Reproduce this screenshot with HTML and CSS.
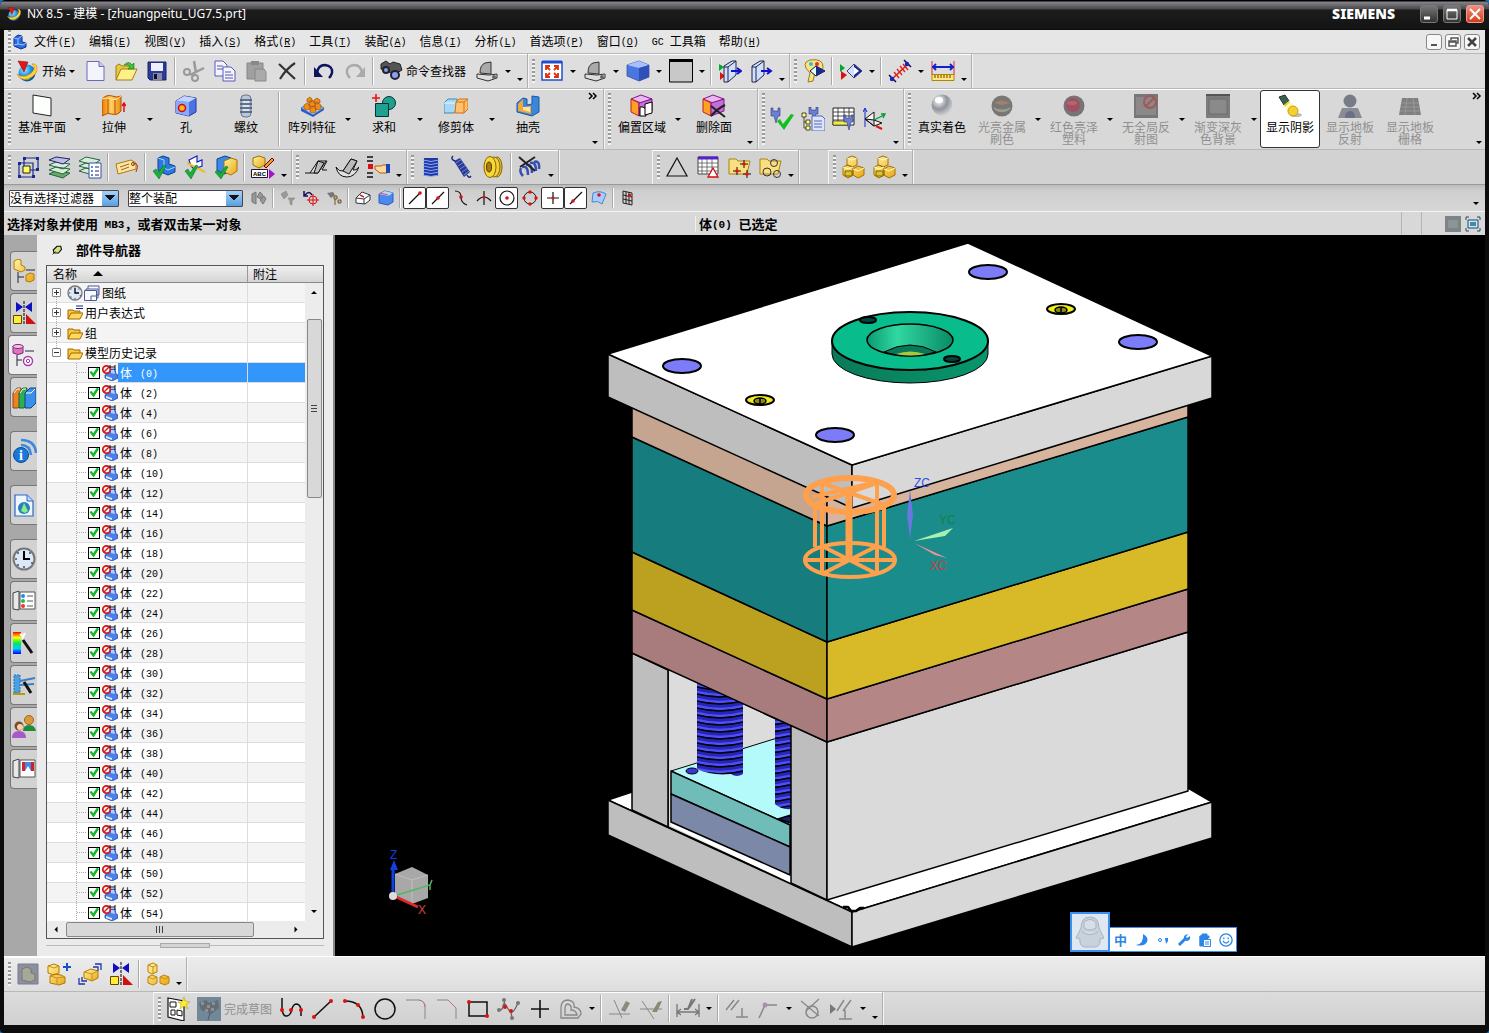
FILE: index.html
```html
<!DOCTYPE html>
<html lang="zh-CN">
<head>
<meta charset="utf-8">
<title>NX 8.5 - 建模</title>
<link rel="stylesheet" href="styles.css">
</head>
<body>
<svg class="sprite" width="0" height="0" aria-hidden="true">
<defs>
<linearGradient id="gBlue" x1="0" y1="0" x2="1" y2="1"><stop offset="0" stop-color="#a8c4ff"/><stop offset="1" stop-color="#2a4fc0"/></linearGradient>
<linearGradient id="gGold" x1="0" y1="0" x2="1" y2="1"><stop offset="0" stop-color="#fff3a0"/><stop offset="1" stop-color="#e8a818"/></linearGradient>
<linearGradient id="gOrange" x1="0" y1="0" x2="1" y2="0"><stop offset="0" stop-color="#f07800"/><stop offset=".5" stop-color="#ffd060"/><stop offset="1" stop-color="#f08a10"/></linearGradient>
<radialGradient id="gBall" cx=".35" cy=".3" r=".8"><stop offset="0" stop-color="#fff"/><stop offset=".5" stop-color="#8f949c"/><stop offset="1" stop-color="#e0e0e0"/></radialGradient>
<radialGradient id="gGlobe" cx=".35" cy=".3" r=".8"><stop offset="0" stop-color="#9fe8ff"/><stop offset=".5" stop-color="#1c8fe0"/><stop offset="1" stop-color="#0a3a90"/></radialGradient>
<linearGradient id="gSpec" x1="0" y1="0" x2="0" y2="1"><stop offset="0" stop-color="#f00"/><stop offset=".25" stop-color="#ff0"/><stop offset=".5" stop-color="#0e4"/><stop offset=".75" stop-color="#0cf"/><stop offset="1" stop-color="#00f"/></linearGradient>
</defs>
<symbol id="nx" viewBox="0 0 24 24"><circle cx="12" cy="14" r="8.500" fill="url(#gGlobe)"/><path d="M8 18q5-3 7 2-4 3-7-2z" fill="#3c3"/><path d="M2 15q3 7 11 5 10-4 9-12-1-4-5-3 3 2 2 5-2 5-8 7-6 1-9-2z" fill="#ffd23a" stroke="#b87800" stroke-width=".5"/><path d="M3 2l10 1-4 10z" fill="#e01818" stroke="#800" stroke-width=".5"/></symbol>
<symbol id="part" viewBox="0 0 16 16"><path d="M2 4l4-3 4 1v6l4 1v4l-5 2-7-3z" fill="#2a6ae0" stroke="#10308c"/><path d="M2 4l4 1v5l5 1 3-2M6 5l4-3M6 10l-4 1" fill="none" stroke="#9cc4ff"/></symbol>
<symbol id="new" viewBox="0 0 24 24"><path d="M4 2.500h12l5 5v14H4z" fill="#f4f4ff" stroke="#6a6ac0"/><path d="M16 2.500v5h5" fill="#c8c8f0" stroke="#6a6ac0"/></symbol>
<symbol id="open" viewBox="0 0 24 24"><path d="M2 21V7l3-2 3 2h8v4" fill="#e8c840" stroke="#a08010"/><path d="M2 21l5-11h16l-5 11z" fill="#fff08a" stroke="#a08010"/><path d="M10 6q5-5 8 0l2-2v6h-6l2-2q-2-3-6-2z" fill="#3cc23c" stroke="#187018" stroke-width=".6"/></symbol>
<symbol id="save" viewBox="0 0 24 24"><path d="M3 3h18v18H5l-2-2z" fill="#2a3c98" stroke="#182460"/><path d="M6 4h12v8H6z" fill="#eef"/><path d="M8 14h9v7H8z" fill="#88a"/><path d="M9 15h3v5H9z" fill="#112"/></symbol>
<symbol id="cut" viewBox="0 0 24 24"><path d="M12 2l2 12M22 9L8 16" stroke="#999" stroke-width="2.500"/><circle cx="5" cy="13" r="3" fill="none" stroke="#999" stroke-width="2"/><circle cx="13" cy="19" r="3" fill="none" stroke="#999" stroke-width="2"/></symbol>
<symbol id="copy" viewBox="0 0 24 24"><path d="M2 2h8l4 4v11H2z" fill="#f4f4ff" stroke="#5a5ab8"/><path d="M4 7h6M4 10h6" stroke="#55a"/><path d="M10 8h8l4 4v10H10z" fill="#f4f4ff" stroke="#5a5ab8"/><path d="M12 13h6M12 16h8M12 19h8" stroke="#55a"/></symbol>
<symbol id="paste" viewBox="0 0 24 24"><path d="M3 4h16v16H3z" fill="#a0a0a0" stroke="#888"/><path d="M7 2h8v4H7z" fill="#888"/><path d="M11 10h9l2 3v9H11z" fill="#aaa" stroke="#888"/></symbol>
<symbol id="del" viewBox="0 0 24 24"><path d="M4 5l16 15M20 4Q11 10 5 20" stroke="#333" stroke-width="2.200" fill="none"/></symbol>
<symbol id="undo" viewBox="0 0 24 24"><path d="M5 14q1-8 8-8 8 1 7 8-1 3-3 5" fill="none" stroke="#0c1460" stroke-width="2.400"/><path d="M2 8v10h9z" fill="#0c1460"/></symbol>
<symbol id="redo" viewBox="0 0 24 24"><path d="M19 14q-1-8-8-8-8 1-7 8 1 3 3 5" fill="none" stroke="#aaa" stroke-width="2.400"/><path d="M22 8v10h-9z" fill="#aaa"/></symbol>
<symbol id="binoc" viewBox="0 0 24 24"><path d="M2 5l5-3 4 3 3-2 7 2 2 6-5 3-10-1-6-3z" fill="#555" stroke="#222"/><circle cx="7" cy="11" r="3" fill="#8aa0e0" stroke="#223" stroke-width="2"/><circle cx="16" cy="16" r="4" fill="#8aa0f0" stroke="#223" stroke-width="2"/></symbol>
<symbol id="laptop" viewBox="0 0 24 24"><path d="M5 14q0-8 5-10l6-1v12z" fill="#aaa" stroke="#333"/><path d="M2 15l12 1 8-1v4l-9 3L2 19z" fill="#ddd" stroke="#333"/><circle cx="19" cy="18" r="2" fill="#666"/></symbol>
<symbol id="fit" viewBox="0 0 24 24"><path d="M2 3h20v18H2z" fill="#fff" stroke="#1a50d0" stroke-width="1.500"/><path d="M2 3h20" stroke="#1a50d0" stroke-width="3"/><path d="M6 11V7h4M14 7h4v4M18 14v4h-4M10 18H6v-4M7 8l3 3M17 8l-3 3M17 17l-3-3M7 17l3-3" fill="none" stroke="#e03010" stroke-width="1.800"/></symbol>
<symbol id="cube" viewBox="0 0 24 24"><path d="M1 6l12-4 10 4v12l-10 4-12-5z" fill="#4a76e0" stroke="#2a48a0" stroke-width=".7"/><path d="M1 6l12-4 10 4-10 3z" fill="#a8c0ff"/><path d="M13 9l10-3v12l-10 4z" fill="#2e50b8"/></symbol>
<symbol id="square" viewBox="0 0 24 24"><path d="M.500 1h23v22H.500z" fill="#c8c8c8" stroke="#000"/><path d="M0 1.500h24" stroke="#000" stroke-width="3"/></symbol>
<symbol id="clip" viewBox="0 0 24 24"><path d="M1 5l5 3-5 4z" fill="#0a3"/><path d="M2 13l5 4-5 4z" fill="#d11"/><path d="M6 7l8-5h4v14l-8 7H6z" fill="#cfe0ff" stroke="#224"/><path d="M10 23V8l8-6M10 8H6" fill="none" stroke="#224"/><path d="M13 12h9M19 9l4 3-4 3" fill="none" stroke="#11c" stroke-width="2"/></symbol>
<symbol id="clip2" viewBox="0 0 24 24"><path d="M3 7l8-5h4v14l-8 7H3z" fill="#cfe0ff" stroke="#224"/><path d="M7 23V8l8-6M7 8H3" fill="none" stroke="#224"/><path d="M12 12h9M18 9l4 3-4 3" fill="none" stroke="#11c" stroke-width="2"/></symbol>
<symbol id="palette" viewBox="0 0 24 24"><path d="M8 1q14-2 13 8-2 5-8 4l-2 9-5 1 2-9Q-2 4 8 1z" fill="#f6e488" stroke="#a07a10"/><circle cx="9" cy="5" r="2" fill="#3bd"/><circle cx="15" cy="5" r="2" fill="#d33"/><path d="M8 12l6-5 9 5-9 5z" fill="#dff" stroke="#113"/><path d="M14 7l9 5-9 5z" fill="#1a2a88"/></symbol>
<symbol id="orient" viewBox="0 0 24 24"><path d="M1 5l5 4-5 4z" fill="#0a3"/><path d="M2 12l6 4-6 5z" fill="#d11"/><path d="M8 12l7-7 8 7-8 7z" fill="#cfe0ff" stroke="#447"/><path d="M15 5l8 7-8 7z" fill="#1a2a88"/><path d="M15 8v8l5-4z" fill="#fff"/></symbol>
<symbol id="meas" viewBox="0 0 24 24"><path d="M3 21L20 5" stroke="#c22" stroke-width="1.500"/><path d="M6 13l5 6M9 10l5 6M12 7l5 6M15 5l5 6" stroke="#d22" stroke-width="1.400"/><path d="M1 16l7 7M16 1l7 7" stroke="#113" stroke-width="1.500"/><circle cx="4" cy="20" r="2.200" fill="#12c"/><circle cx="19" cy="5" r="2.200" fill="#12c"/></symbol>
<symbol id="ruler" viewBox="0 0 24 24"><path d="M1 2v14M23 2v14" stroke="#e22"/><path d="M1 8h22M5 5L2 8l3 3M19 5l3 3-3 3" fill="none" stroke="#12c" stroke-width="1.800"/><path d="M1 15.500h22v6H1z" fill="#ffe680" stroke="#a80"/><path d="M4 16v3M7 16v3M10 16v3M13 16v3M16 16v3M19 16v3" stroke="#730"/></symbol>
<symbol id="plane" viewBox="0 0 24 24"><path d="M3 1l18 3v18L3 19z" fill="#fdfffd" stroke="#222"/></symbol>
<symbol id="extrude" viewBox="0 0 24 24"><path d="M0 5q5-5 10-3 5 2 9 0v15q-4 5-9 3-4-2-10 2z" fill="url(#gOrange)" stroke="#b05000"/><path d="M0 5q5-2 9 0 5 2 10-3" fill="none" stroke="#ffe8a0"/><path d="M6 5v15M13 6v14" stroke="#b05000"/><path d="M22 18V9M20 12l2-3 2 3" stroke="#d11" stroke-width="1.500" fill="none"/></symbol>
<symbol id="hole" viewBox="0 0 24 24"><path d="M2 7l8-5 12 2v14l-7 4-13-3z" fill="#4c74e0" stroke="#2236a0"/><path d="M2 7l8-5 12 2-7 4z" fill="#c4d4ff"/><path d="M2 7l13 1v14l-13-3z" fill="#8ca8ff"/><circle cx="8" cy="14" r="3.500" fill="#ffb020" stroke="#c01010" stroke-width="1.500"/></symbol>
<symbol id="thread" viewBox="0 0 24 24"><rect x="7" y="1" width="10" height="22" rx="4" fill="#b8c8d8" stroke="#678"/><path d="M6 6h12M6 10h12M6 14h12M6 18h12" stroke="#457" stroke-width="1.500"/><path d="M9 8h6M9 12h6M9 16h6" stroke="#fff"/></symbol>
<symbol id="pattern" viewBox="0 0 24 24"><path d="M1 14l12-6 11 6-11 7z" fill="#bcd4ff" stroke="#28a"/><path d="M1 14v3l12 6 11-7v-2l-11 7z" fill="#2a5ad0"/><path d="M4 11l3-2 3 2v4l-3 1-3-1zM9 8l3-2 3 2v4l-3 1-3-1zM10 14l3-2 3 2v4l-3 1-3-1zM15 11l3-2 3 2v4l-3 1-3-1zM7 5l3-2 2 2v3H7zM14 6l3-2 3 2v3h-6z" fill="#f08a18" stroke="#a04c00" stroke-width=".6"/></symbol>
<symbol id="unite" viewBox="0 0 24 24"><circle cx="17" cy="9" r="6.500" fill="#20a090" stroke="#033"/><path d="M3.500 9.500h13v13h-13z" fill="#20a090" stroke="#033"/><path d="M0 4h8M4 0v8" stroke="#e11" stroke-width="1.600"/></symbol>
<symbol id="trim" viewBox="0 0 24 24"><path d="M0 9l4-4h9v10l-3 4H0z" fill="#a8d8f8" stroke="#48a"/><path d="M0 9h11" stroke="#e8f8ff"/><path d="M12 8l3-3h9v10l-4 4h-9z" fill="#ffc070" stroke="#d07010"/><path d="M12 8h8l4-3M20 8v11" stroke="#d07010" fill="none"/></symbol>
<symbol id="shell" viewBox="0 0 24 24"><path d="M1 9l6-5 4 1v6l5-1V2l7 1v15l-7 4-15-4z" fill="#3a86d8" stroke="#1a58a0"/><path d="M2 10l5-5v8l8-1v8l-13-3z" fill="#f0a840"/><path d="M7 13h7v5l-7-2z" fill="#ffe0a0"/></symbol>
<symbol id="offset" viewBox="0 0 24 24"><path d="M1 5l10-4 11 4-11 4z" fill="#e8b8f0" stroke="#818"/><path d="M1 5l8 4v13l-8-4z" fill="#ffa020" stroke="#b22"/><path d="M9 9l13-4v12l-13 5z" fill="#c070d8" stroke="#818"/><path d="M10 13h3l3 2v7h-6z" fill="#fff" stroke="#000"/><path d="M15 10l7-2v11l-7 2z" fill="#fff" stroke="#000"/></symbol>
<symbol id="delface" viewBox="0 0 24 24"><path d="M1 5l10-4 11 4-11 4z" fill="#e8b8f0" stroke="#818"/><path d="M1 5l8 4v13l-8-4z" fill="#ffa020" stroke="#b22"/><path d="M9 9l13-4v12l-13 5z" fill="#c070d8" stroke="#818"/><path d="M9 12l14 11M23 11Q15 15 9 22" fill="none" stroke="#222" stroke-width="2"/></symbol>
<symbol id="chk" viewBox="0 0 24 24"><path d="M1 1h2v3h5V1h2v8H8l-2 7-2-7H1z" fill="#6a80d0" stroke="#338" stroke-width=".6"/><path d="M7 14l3-2 3 5 8-10 3 1-10 15z" fill="#10c020"/></symbol>
<symbol id="feat" viewBox="0 0 24 24"><path d="M8 0h2v3h5V0h2v7h-2l-2 6-2-6H8z" fill="#6a80d0" stroke="#338" stroke-width=".6"/><path d="M1 6h4v4H1zM5 13h4v4H5zM5 19h4v4H5zM3 10v11h2M3 15h2" fill="#ff8" stroke="#222" stroke-width=".8"/><path d="M11 9h10l3 3v12H11z" fill="#dde4ff" stroke="#56a"/><path d="M13 14h8M13 17h8M13 20h8" stroke="#56a"/></symbol>
<symbol id="sheet" viewBox="0 0 24 24"><path d="M1 1h21v17H1z" fill="#fff" stroke="#222"/><path d="M1 5h21M1 9h21M1 13h21M6 1v17M12 1v17M17 1v17" stroke="#222" stroke-width=".8"/><path d="M1 14h16v4H1z" fill="#ee4" stroke="#222" stroke-width=".6"/><path d="M12 8h2v3h5V8h2v7h-2l-2 8-2-8h-3z" fill="#6a80d0" stroke="#338" stroke-width=".6"/></symbol>
<symbol id="csys" viewBox="0 0 24 24"><path d="M2 20V2M0 5l2-4 2 4" stroke="#12c" fill="none"/><path d="M2 12l9-7v14zM2 12l9 7 8-3-8-3z" fill="#f4f4f4" stroke="#111"/><path d="M11 13l10-5M18 7l4 0-2 4" stroke="#093" fill="none" stroke-width="1.300"/><path d="M13 19l6 3" stroke="#d11" stroke-width="2"/></symbol>
<symbol id="ball" viewBox="0 0 24 24"><circle cx="12" cy="11" r="10.500" fill="url(#gBall)"/><ellipse cx="9" cy="6" rx="4" ry="3" fill="#fff"/></symbol>
<symbol id="ballB" viewBox="0 0 24 24"><circle cx="12" cy="12" r="10.500" fill="#7a7674"/><path d="M3 13q9 5 18 0-2 5-9 5t-9-5z" fill="#98a098"/><path d="M4 9q8-5 16 0l-8 2z" fill="#a08070"/></symbol>
<symbol id="ballR" viewBox="0 0 24 24"><circle cx="12" cy="12" r="10.500" fill="#787476"/><circle cx="11" cy="11" r="7" fill="#a05060"/><ellipse cx="10" cy="9" rx="5" ry="2" fill="#b06870"/></symbol>
<symbol id="noref" viewBox="0 0 24 24"><path d="M0 0h24v24H0z" fill="#777"/><path d="M2 3h20v18H2z" fill="#8c8888"/><circle cx="16" cy="8" r="6" fill="none" stroke="#a05858" stroke-width="2"/><path d="M12 12l8-8" stroke="#a05858" stroke-width="2"/></symbol>
<symbol id="bgbox" viewBox="0 0 24 24"><path d="M0 0h24v24H0z" fill="#7c7c7c"/><path d="M0 1h24" stroke="#555" stroke-width="2"/><path d="M3 5h18v15H3z" fill="#8a8a8a" stroke="#6c6c6c"/></symbol>
<symbol id="torch" viewBox="0 0 24 24"><ellipse cx="18" cy="21" rx="6" ry="2" fill="#bbb"/><path d="M1 3l6-2 4 6-5 4z" fill="#3c6048" stroke="#234"/><path d="M6 11l5-4 8 9-7 6z" fill="#fff8b0"/><path d="M6 11l5-4 1 1-5 5z" fill="#e8d020"/><circle cx="15" cy="17" r="5" fill="#f4d030" stroke="#c8a010"/></symbol>
<symbol id="person" viewBox="0 0 24 24"><circle cx="12" cy="7" r="6.500" fill="#787c88"/><path d="M4 14h16l4 10H0z" fill="#8a8c94"/><path d="M7 24q0-7 5-7t5 7z" fill="#6a7088"/></symbol>
<symbol id="floor" viewBox="0 0 24 24"><path d="M4 4h16l3 17H1z" fill="#808080"/><path d="M4 9h17M3 13h19M2 17h20M9 4L7 21M15 4l2 17" stroke="#a0a0a0" stroke-width=".7"/></symbol>
<symbol id="frames" viewBox="0 0 24 24"><path d="M8 3h14v12H8zM3 8h14v14H3z" fill="none" stroke="#1a2a90" stroke-width="1.200"/><path d="M7 11h7v7H7z" fill="#ffff60" stroke="#222"/><path d="M2 7h3v3H2zM2 20h3v3H2zM16 20h3v3h-3zM7 2h3v3H7zM20 2h3v3h-3zM20 13h3v3h-3z" fill="#1a2a90"/></symbol>
<symbol id="layers" viewBox="0 0 24 24"><path d="M2 19l7-3 14 2-7 5z" fill="#6aa86a" stroke="#264"/><path d="M2 15l7-3 14 2-7 5zM2 10l7-3 14 2-7 5z" fill="#d8ecd8" stroke="#264"/><path d="M2 5l7-3 14 2-7 5z" fill="#bcc0e8" stroke="#226"/></symbol>
<symbol id="layers2" viewBox="0 0 24 24"><path d="M1 16l7-3 14 2-7 5zM1 11l7-3 14 2-7 5zM1 6l7-4 14 3-7 5z" fill="#d8ecd8" stroke="#264"/><path d="M11 8h12v15H11z" fill="#fff" stroke="#3050a0"/><path d="M13 11h2v2h-2zM13 15h2v2h-2zM13 19h2v2h-2z" fill="#68c"/><path d="M17 12h4M17 16h4M17 20h4" stroke="#226"/></symbol>
<symbol id="tag" viewBox="0 0 24 24"><path d="M1 9l15-4 5 3v6L3 19z" fill="#ffe49a" stroke="#b07810"/><path d="M5 12l9-3M6 15l8-3" stroke="#864"/><circle cx="18" cy="9" r="1.500" fill="#fff" stroke="#830"/><path d="M18 9q7-2 3 8" fill="none" stroke="#a33"/></symbol>
<symbol id="ckblue" viewBox="0 0 24 24"><path d="M6 3l5-2 6 2v6l6 2v6l-7 3-10-4z" fill="#2a78e0" stroke="#104090"/><path d="M6 3l6 2v8l4 2 7-3" fill="none" stroke="#a8d0ff"/><path d="M1 16l3-2 2 4 6-8 2 1-7 13z" fill="#18b030" stroke="#063" stroke-width=".5"/></symbol>
<symbol id="ckplane" viewBox="0 0 24 24"><path d="M6 5l8-4v6l5-2v6l-8 3-3-3z" fill="#fff" stroke="#12c" stroke-width="1.200"/><path d="M4 8l18 9" stroke="#e8c020" stroke-width="2"/><path d="M2 16l3-2 2 4 6-8 2 1-7 13z" fill="#18b030" stroke="#063" stroke-width=".5"/></symbol>
<symbol id="ckgold" viewBox="0 0 24 24"><path d="M3 4l8-3 6 2v12l-6 4-8-3z" fill="#3a88e8" stroke="#104090"/><path d="M10 6l7-3 6 2v11l-6 4-7-3z" fill="url(#gGold)" stroke="#b07000"/><path d="M1 17l3-2 2 4 6-8 2 1-7 12z" fill="#18b030" stroke="#063" stroke-width=".5"/></symbol>
<symbol id="bend" viewBox="0 0 24 24"><path d="M1 18h5l8-12h9l-5 9h5M6 18h8l8-12" fill="#e8e8e8" stroke="#111"/><path d="M14 6l-4 12h4l6-10z" fill="#bbb" stroke="#111"/></symbol>
<symbol id="bend2" viewBox="0 0 24 24"><path d="M1 12q3 5 7 4l8-12 6 2-4 9q3 1 6-3-4 10-12 10-9 0-11-10z" fill="#e0e0e0" stroke="#111"/><path d="M8 16l8-12 6 2-8 13z" fill="#bbb" stroke="#111"/></symbol>
<symbol id="point" viewBox="0 0 24 24"><path d="M1 2h6M1 22h6M1 6h6M1 18h6" stroke="#111" stroke-width="1.500"/><path d="M2 9h5v5H2z" fill="#d11"/><path d="M9 11h6l2-1h4v8h-7l-5-4z" fill="#ffd8a0" stroke="#a60"/><path d="M20 9h4v9h-4z" fill="#24b"/></symbol>
<symbol id="spring" viewBox="0 0 24 24"><path d="M5 3h14v18H5z" fill="#2238a0"/><path d="M4 5q8 3 16 0M4 8q8 3 16 0M4 11q8 3 16 0M4 14q8 3 16 0M4 17q8 3 16 0M4 20q8 3 16 0" stroke="#88a8ff" fill="none"/></symbol>
<symbol id="spring2" viewBox="0 0 24 24"><path d="M4 6l6-3 10 14-6 5z" fill="#2a3c98"/><path d="M6 8l6-4M8 11l6-4M10 14l6-4M12 17l6-4M14 20l5-4" stroke="#98a8e8" stroke-width=".7"/><path d="M5 6q-5-2-2-5M17 20q2 4 4 1" stroke="#1a2a80" stroke-width="1.500" fill="none"/></symbol>
<symbol id="disc" viewBox="0 0 24 24"><ellipse cx="16" cy="12" rx="5" ry="10" fill="#e8c030" stroke="#860"/><ellipse cx="13" cy="12" rx="6" ry="10" fill="#f0d040" stroke="#860"/><ellipse cx="9" cy="12" rx="6" ry="10.500" fill="#f8d838" stroke="#860"/><ellipse cx="8" cy="12" rx="2.500" ry="5" fill="#a87a10" stroke="#540"/></symbol>
<symbol id="nospring" viewBox="0 0 24 24"><path d="M4 12q6-2 6 8M8 10q6-2 6 8M12 8q6-2 6 8M16 7q6-2 5 7M5 21q-4-4-2-8" fill="none" stroke="#3a50b0" stroke-width="2.500"/><path d="M1 2l16 14M17 2L2 12" stroke="#222" stroke-width="2"/></symbol>
<symbol id="tri" viewBox="0 0 24 24"><path d="M12 3l10 18H2z" fill="none" stroke="#111" stroke-width="1.200"/></symbol>
<symbol id="tbl" viewBox="0 0 24 24"><path d="M2 2h20v17H2z" fill="#fff" stroke="#444"/><path d="M2 3h20" stroke="#52c" stroke-width="3"/><path d="M2 8h20M2 12h20M2 16h20M6 4v15M11 4v15M16 4v15" stroke="#444" stroke-width=".7"/><path d="M17 13l5 9H12z" fill="#fff" stroke="#c11" stroke-width="1.300"/></symbol>
<symbol id="fold1" viewBox="0 0 24 24"><path d="M2 19V4h7l2 2h12l-3 13z" fill="#f8e080" stroke="#a88010"/><path d="M17 5v8M13 9h8M10 12v8M6 16h8M20 15v8M16 19h8" stroke="#111"/><circle cx="17" cy="9" r="1.800" fill="#e11"/><circle cx="10" cy="16" r="1.800" fill="#e11"/><circle cx="20" cy="19" r="1.800" fill="#e11"/></symbol>
<symbol id="fold2" viewBox="0 0 24 24"><path d="M2 19V4h7l2 2h12l-3 13z" fill="#f8e080" stroke="#a88010"/><g fill="none" stroke="#333"><circle cx="16" cy="8" r="3.500"/><circle cx="9" cy="17" r="4"/><circle cx="19" cy="19" r="3.500"/></g></symbol>
<symbol id="asm" viewBox="0 0 24 24"><path d="M6 3l5-2 5 2v7l-5 2-5-2zM2 12l5-2 5 2v8l-5 3-5-3zM12 14l5-3 6 2v7l-6 3-5-3z" fill="url(#gGold)" stroke="#a87000"/><path d="M6 3l5 2 5-2M2 12l5 2 5-2M12 14l5 2 6-3" fill="none" stroke="#fffbd0"/><path d="M4 16h7v5H4z" fill="#e0c030" stroke="#760"/></symbol>
<symbol id="asm3" viewBox="0 0 24 24"><path d="M2 3l5-2 4 2v7l-5 2-4-2zM2 15l4-2 5 2v6l-4 2-5-2zM14 15l4-2 5 2v6l-4 2-5-2z" fill="url(#gGold)" stroke="#c08000"/><path d="M2 3l5 2 4-2M7 5v7M2 15l5 2 4-2M14 15l5 2 4-2" fill="none" stroke="#c89020"/></symbol>
<symbol id="asmoff" viewBox="0 0 24 24"><path d="M2 2h20v20H2z" fill="#8c909c" stroke="#777c90"/><path d="M6 7l5-2 4 2v4l4 1v6l-5 2-8-2z" fill="#a8a898" stroke="#777"/></symbol>
<symbol id="asmadd" viewBox="0 0 24 24"><path d="M1 4l6-2 5 2v7l-5 2-6-2zM3 14l5-2 6 1 4 2v6l-6 2-9-2z" fill="url(#gGold)" stroke="#b87800"/><path d="M1 4l6 2 5-2M3 14l7 2 7-1M10 16v7" fill="none" stroke="#c89020"/><path d="M20 1v8M16 5h8" stroke="#15c" stroke-width="2"/></symbol>
<symbol id="asmmove" viewBox="0 0 24 24"><path d="M6 10l7-3 7 2v7l-6 3-8-3z" fill="url(#gGold)" stroke="#b87800"/><path d="M6 10l8 2 6-3M14 12v7" fill="none" stroke="#c89020"/><path d="M17 2h6v6M15 5h5v4M7 22H1v-6M9 19H4v-4" fill="none" stroke="#23a" stroke-width="1.300"/></symbol>
<symbol id="mirror" viewBox="0 0 24 24"><path d="M4 1l7 5-7 5zM20 1l-7 5 7 5z" fill="#1010c0"/><path d="M12 0v24" stroke="#000" stroke-dasharray="3 1"/><path d="M1.500 14.500h8v8h-8z" fill="#fe3" stroke="#640"/><path d="M14 13v10h10z" fill="#d01010"/></symbol>
<symbol id="gears" viewBox="0 0 16 16"><path d="M1 4l4-2v12l-4-2zM6 7l3-5 3 3-2 4zM9 10l4-4 2 3-3 5z" fill="#999" stroke="#777"/></symbol>
<symbol id="filt" viewBox="0 0 16 16"><path d="M1 4l5-3 2 4-4 4zM8 8h7l-3 3v4l-2-1v-3z" fill="#999" stroke="#888" stroke-width=".6"/></symbol>
<symbol id="reset" viewBox="0 0 16 16"><path d="M1 1v5h4M2 5q4-5 7 0" fill="none" stroke="#115" stroke-width="1.500"/><circle cx="10" cy="10" r="4" fill="none" stroke="#d11"/><path d="M10 4v12M4 10h12" stroke="#d11"/></symbol>
<symbol id="sfilt" viewBox="0 0 16 16"><path d="M1 3l6-1 2 3-4 3z" fill="#777"/><path d="M8 6h3v3H8zM12 10h3v3h-3zM9 9v6" fill="#db4" stroke="#654"/></symbol>
<symbol id="box1" viewBox="0 0 16 16"><path d="M1 8l6-6 8 3v5l-5 4-9-1z" fill="#fff" stroke="#334"/><path d="M1 8l8 1 6-4M9 9v5" fill="none" stroke="#334"/><path d="M5 5l4 2" stroke="#d22" stroke-width="1.500"/></symbol>
<symbol id="box2" viewBox="0 0 16 16"><path d="M1 4l6-3 8 2v9l-5 3-9-2z" fill="#4a8af0" stroke="#2a5ac0"/><path d="M1 4l6-3 8 2-5 3z" fill="#b8d8ff"/><path d="M2 3l8 2" stroke="#e44"/></symbol>
<symbol id="s1" viewBox="0 0 16 16"><path d="M2 14L13 3" stroke="#111" stroke-width="1.200"/><circle cx="13" cy="3" r="1.800" fill="#d11"/></symbol>
<symbol id="s2" viewBox="0 0 16 16"><path d="M2 14L14 2" stroke="#111" stroke-width="1.200"/><circle cx="8" cy="8" r="1.800" fill="#d11"/></symbol>
<symbol id="s3" viewBox="0 0 16 16"><path d="M2 1q6 0 6 6t6 8" fill="none" stroke="#111" stroke-width="1.200"/><circle cx="8" cy="7" r="1.800" fill="#d11"/></symbol>
<symbol id="s4" viewBox="0 0 16 16"><path d="M1 11q7-8 14 0M8 1v14" fill="none" stroke="#111" stroke-width="1.200"/><circle cx="8" cy="7" r="1.500" fill="#d11"/></symbol>
<symbol id="s5" viewBox="0 0 16 16"><circle cx="8" cy="8" r="7" fill="none" stroke="#111" stroke-width="1.200"/><circle cx="8" cy="8" r="1.800" fill="#d11"/></symbol>
<symbol id="s6" viewBox="0 0 16 16"><circle cx="8" cy="8" r="6" fill="none" stroke="#111"/><g fill="#d11"><circle cx="8" cy="2" r="1.700"/><circle cx="8" cy="14" r="1.700"/><circle cx="2" cy="8" r="1.700"/><circle cx="14" cy="8" r="1.700"/></g></symbol>
<symbol id="s7" viewBox="0 0 16 16"><path d="M8 2v12M2 8h12" stroke="#111" stroke-width="1.200"/><circle cx="8" cy="8" r="1.500" fill="#d11"/></symbol>
<symbol id="s8" viewBox="0 0 16 16"><path d="M2 14L14 2" stroke="#111" stroke-width="1.200"/><circle cx="5" cy="11" r="1.800" fill="#d11"/></symbol>
<symbol id="s9" viewBox="0 0 16 16"><path d="M2 3q7-3 13 1l-4 10q-4-4-10-2z" fill="#a8ccff" stroke="#48c"/><circle cx="8" cy="5" r="1.800" fill="#d11"/></symbol>
<symbol id="s10" viewBox="0 0 16 16"><path d="M3 1l9 2v12l-9-2zM3 5l9 2M3 9l9 2M6 2v12M9 2v12" fill="none" stroke="#222"/><path d="M8 4h3v3H8z" fill="#d11"/></symbol>
<symbol id="pin" viewBox="0 0 16 16"><path d="M3 8l5-5h5l1 4-4 5-6 0z" fill="#d8e080" stroke="#111" stroke-width="1.500"/><path d="M2 14l4-4" stroke="#111"/></symbol>
<symbol id="tasm" viewBox="0 0 24 24"><path d="M2 2l4-2 3 1v5l4 2v3l-4 2-7-3zM14 16l4-2 4 1v6l-4 2-4-1z" fill="url(#gGold)" stroke="#b87800"/><path d="M14 11h9M6 13v11M6 18h6" stroke="#224" fill="none"/></symbol>
<symbol id="tpart" viewBox="0 0 24 24"><path d="M2 3q5-3 10 0v7q-5 3-10 0z" fill="#d878b8" stroke="#828"/><ellipse cx="7" cy="3.500" rx="5" ry="2" fill="#f8c8e8" stroke="#828"/><path d="M14 8h9M6 12v11M6 17h5" stroke="#224" fill="none"/><circle cx="17" cy="18" r="4.500" fill="#fff" stroke="#a3a" stroke-width="1.400"/><circle cx="17" cy="18" r="1.700" fill="none" stroke="#a3a"/></symbol>
<symbol id="books" viewBox="0 0 24 24"><path d="M1 8l4-5h4v16l-3 4H1z" fill="#f08020" stroke="#843"/><path d="M7 8l4-5h4v16l-3 4H7z" fill="#2ab050" stroke="#163"/><path d="M13 8l5-5h6v15l-5 5h-6z" fill="#3a90e8" stroke="#148"/><path d="M2 8l3-4h3M8 8l3-4h3M14 8h5l4-4" stroke="#fff" fill="none"/></symbol>
<symbol id="web" viewBox="0 0 24 24"><path d="M3 2h12l6 6v15H3z" fill="#eef6ff" stroke="#2a68c8" stroke-width="1.200"/><path d="M15 2v6h6" fill="#bcd8ff" stroke="#2a68c8"/><circle cx="12" cy="15" r="6" fill="#2a80b8"/><path d="M9 18l3-8 4 8-3 2z" fill="#8e8"/></symbol>
<symbol id="clock" viewBox="0 0 24 24"><circle cx="12" cy="12" r="10.500" fill="#dce8f8" stroke="#777" stroke-width="2"/><path d="M12 4v8h6" fill="none" stroke="#000" stroke-width="2"/><g fill="#357"><circle cx="12" cy="20" r="1"/><circle cx="4" cy="12" r="1"/><circle cx="20" cy="16" r="1"/><circle cx="6" cy="6" r="1"/><circle cx="6" cy="18" r="1"/><circle cx="18" cy="6" r="1"/></g></symbol>
<symbol id="tlist" viewBox="0 0 24 24"><path d="M1 4l6-2v19l-6-1z" fill="#e8e8e8" stroke="#444"/><path d="M8 3h15v17H8z" fill="#fff" stroke="#555"/><path d="M15 7h6M15 12h6M15 17h6" stroke="#555"/><circle cx="11" cy="7" r="2" fill="#28e"/><circle cx="11" cy="12" r="2" fill="#2b4"/><circle cx="11" cy="17" r="2" fill="#e33"/></symbol>
<symbol id="spec" viewBox="0 0 24 24"><path d="M1 1h8v22H1z" fill="url(#gSpec)"/><path d="M11 9l9 13" stroke="#111" stroke-width="3"/><path d="M8 3l4 3M13 2l-3 6" stroke="#fff" stroke-width="2"/></symbol>
<symbol id="machine" viewBox="0 0 24 24"><path d="M2 2h6v18H2z" fill="#4aa0e0" stroke="#27b" stroke-dasharray="2 1"/><path d="M8 8l15-3M8 12l14-1" stroke="#3a80c8" stroke-width="2"/><path d="M12 9l7 11" stroke="#111" stroke-width="3"/><path d="M1 21h12" stroke="#b90" stroke-width="2"/></symbol>
<symbol id="people" viewBox="0 0 24 24"><circle cx="17" cy="5" r="4.500" fill="#d89a40" stroke="#a60"/><path d="M11 16q0-6 6-6t7 6z" fill="#1e8c3c"/><circle cx="7" cy="11" r="4.500" fill="#7c4a30"/><circle cx="8" cy="12" r="3" fill="#ffd0a0"/><path d="M0 23q0-7 7-7t7 7z" fill="#a858c8"/></symbol>
<symbol id="tview" viewBox="0 0 24 24"><path d="M1 4l6-2v19l-6-1z" fill="#e8e8e8" stroke="#444"/><path d="M8 3h15v17H8z" fill="#fff" stroke="#555"/><path d="M10 5h4v9h-4z" fill="#d22"/><path d="M18 5h4v9h-4z" fill="#c22"/><path d="M13 5h6v9h-6z" fill="#48e"/><path d="M13 14l3-5 3 5z" fill="#fff"/></symbol>
<symbol id="folder" viewBox="0 0 16 16"><path d="M1 14V4h5l1 1h6v3" fill="#f8c840" stroke="#a06800"/><path d="M1 14l3-6h12l-3 6z" fill="#ffd860" stroke="#a06800"/></symbol>
<symbol id="folderE" viewBox="0 0 16 16"><path d="M1 14V5h5l1 1h6v3" fill="#f8c840" stroke="#a06800"/><path d="M1 14l3-6h12l-3 6z" fill="#ffd860" stroke="#a06800"/><path d="M9 1h7M9 3.500h7" stroke="#128"/></symbol>
<symbol id="drawing" viewBox="0 0 16 16"><path d="M4 4V1h11v9h-2M2 6V4h12v9h-2M.500 5.500h12v10H.500z" fill="#f8faff" stroke="#4a5a98"/><path d="M7 15v-4h5" fill="none" stroke="#4a5a98"/></symbol>
<symbol id="body" viewBox="0 0 16 16"><path d="M3 10l5-3 1-3h4l1 5 2 1v3l-6 3-7-3z" fill="#4a80e8" stroke="#1a3a98" stroke-width=".7"/><path d="M4 11l6 2v2l-6-2z" fill="#d8e8ff"/><path d="M9 5h3l1 4-4-1z" fill="#b8d0ff"/><circle cx="4.500" cy="4.500" r="3.700" fill="#fff" stroke="#d01818" stroke-width="1.700"/><path d="M2 7l5-5" stroke="#d01818" stroke-width="1.500"/><path d="M8 2h5M8 0v3M13 0v5" stroke="#111"/></symbol>
<symbol id="sketch" viewBox="0 0 24 24"><path d="M2 1l16 3v20L2 20z" fill="#fff" stroke="#111" stroke-width="1.200"/><path d="M4 5h6v5H4zM5 13h4v5H5zM11 13l5 1v5l-5-1z" fill="none" stroke="#111"/><path d="M18 0l1 4 5 1-4 2 2 5-4-3-4 3 1-5-3-2h4z" fill="#fe3" stroke="#a90" stroke-width=".5"/></symbol>
<symbol id="finish" viewBox="0 0 24 24"><path d="M0 0h24v24H0z" fill="#708898"/><path d="M2 6l7-3 3 3 9-3 1 8-8 6-10-4z" fill="#666c74"/><path d="M4 5h3v3H4zM10 8h3v3h-3zM15 5h3v3h-3zM8 12h3v3H8zM14 11h3v3h-3z" fill="#8a9098"/><path d="M13 16l-2 7" stroke="#556"/></symbol>
<symbol id="k1" viewBox="0 0 24 24"><path d="M2 1v11q1 8 5 7 4-1 5-7 1-5 5-5 4 1 4 7v5" fill="none" stroke="#111" stroke-width="1.500"/><g fill="#d11"><circle cx="2" cy="13" r="2"/><circle cx="11" cy="13" r="2"/><circle cx="21" cy="13" r="2"/></g></symbol>
<symbol id="k2" viewBox="0 0 24 24"><path d="M3 20L20 4" stroke="#111" stroke-width="1.500"/><circle cx="3" cy="20" r="2" fill="#d11"/><circle cx="20" cy="4" r="2" fill="#d11"/></symbol>
<symbol id="k3" viewBox="0 0 24 24"><path d="M3 4q17 0 18 16" fill="none" stroke="#111" stroke-width="1.500"/><g fill="#d11"><circle cx="3" cy="4" r="2"/><circle cx="16" cy="8" r="2"/><circle cx="21" cy="20" r="2"/></g></symbol>
<symbol id="k4" viewBox="0 0 24 24"><circle cx="12" cy="12" r="10" fill="none" stroke="#111" stroke-width="1.500"/></symbol>
<symbol id="k5" viewBox="0 0 24 24"><path d="M2 3h13q6 1 6 7v12" fill="none" stroke="#888"/><path d="M15 3q6 1 6 7" fill="none" stroke="#b77"/></symbol>
<symbol id="k6" viewBox="0 0 24 24"><path d="M2 3h11l8 8v11" fill="none" stroke="#888"/><path d="M13 3l8 8" stroke="#b77"/></symbol>
<symbol id="k7" viewBox="0 0 24 24"><path d="M3 5h18v14H3z" fill="none" stroke="#111" stroke-width="1.500"/><circle cx="3" cy="5" r="2" fill="#d11"/><circle cx="21" cy="19" r="2" fill="#d11"/></symbol>
<symbol id="k8" viewBox="0 0 24 24"><path d="M2 13q4 0 4-4 1-5 4 1t5 5q2 0 6-9M7 3l1 7M14 15l1 6" fill="none" stroke="#666" stroke-width="1.300"/><g fill="#d11"><circle cx="8" cy="10" r="2"/><circle cx="14" cy="14" r="2"/></g><g fill="#777"><circle cx="7" cy="3" r="2"/><circle cx="2" cy="13" r="2"/><circle cx="21" cy="6" r="2"/><circle cx="15" cy="21" r="2"/></g></symbol>
<symbol id="k9" viewBox="0 0 24 24"><path d="M12 3v18M3 12h18" stroke="#111" stroke-width="1.600"/></symbol>
<symbol id="k10" viewBox="0 0 24 24"><path d="M2 21V11q0-8 7-8 7 1 6 7 7 1 7 7l-3 4zM6 18v-6q0-5 3-5 4 1 3 6 5 0 6 5z" fill="none" stroke="#888" stroke-width="1.300"/></symbol>
<symbol id="k11" viewBox="0 0 24 24"><path d="M1 17h21M6 3l8 18" stroke="#888"/><path d="M13 13l5-9 4 2-5 9z" fill="#8a8a80"/></symbol>
<symbol id="k12" viewBox="0 0 24 24"><path d="M1 12h22M3 4l12 18" stroke="#888"/><path d="M13 15l6-10 4-1-5 11z" fill="#8a8a70"/></symbol>
<symbol id="k13" viewBox="0 0 24 24"><path d="M1 7v13M23 7v13M1 15h22M5 12l-4 3 4 3M19 12l4 3-4 3" fill="none" stroke="#777" stroke-width="1.300"/><path d="M8 12h4l4-10M13 11l6-9" stroke="#777" stroke-width="2" fill="none"/></symbol>
<symbol id="k14" viewBox="0 0 24 24"><path d="M1 13L9 3M6 13l8-10M11 20h12M17 11v9" stroke="#888" stroke-width="1.500"/></symbol>
<symbol id="k15" viewBox="0 0 24 24"><path d="M3 21L9 8h12" fill="none" stroke="#888" stroke-width="1.500"/><circle cx="9" cy="8" r="2.500" fill="#a890b0"/></symbol>
<symbol id="k16" viewBox="0 0 24 24"><circle cx="13" cy="15" r="6" fill="none" stroke="#888" stroke-width="1.500"/><path d="M2 4l18 15M20 2L7 14" stroke="#888" stroke-width="1.300"/></symbol>
<symbol id="k17" viewBox="0 0 24 24"><path d="M0 7l6 5-6 5z" fill="#777"/><path d="M7 14l7-11M13 14l8-11M9 22h13M15 13v9" stroke="#888" stroke-width="1.500"/></symbol>
<symbol id="chev" viewBox="0 0 10 8"><path d="M1 1l3 3-3 3M5 1l3 3-3 3" fill="none" stroke="#000" stroke-width="1.500"/></symbol>
</svg>

<div class="window">
<header class="titlebar">
  <svg class="i16"><use href="#nx"/></svg>
  <h1>NX 8.5 - 建模 - [zhuangpeitu_UG7.5.prt]</h1>
  <strong class="brand">SIEMENS</strong>
  <button class="win" aria-label="最小化"><svg viewBox="0 0 16 16"><path d="M3 12h6" stroke="#fff" stroke-width="3"/></svg></button>
  <button class="win" aria-label="最大化"><svg viewBox="0 0 16 16"><path d="M3 4h10v9H3z" fill="none" stroke="#fff"/><path d="M3 4h10" stroke="#fff" stroke-width="2.500"/></svg></button>
  <button class="win close" aria-label="关闭"><svg viewBox="0 0 16 16"><path d="M3 3l10 10M13 3L3 13" stroke="#fff" stroke-width="2"/></svg></button>
</header>

<nav class="menubar">
  <i class="grip"></i><svg class="i16"><use href="#part"/></svg>
  <ul>
    <li><button>文件<span>(<u>F</u>)</span></button></li>
    <li><button>编辑<span>(<u>E</u>)</span></button></li>
    <li><button>视图<span>(<u>V</u>)</span></button></li>
    <li><button>插入<span>(<u>S</u>)</span></button></li>
    <li><button>格式<span>(<u>R</u>)</span></button></li>
    <li><button>工具<span>(<u>T</u>)</span></button></li>
    <li><button>装配<span>(<u>A</u>)</span></button></li>
    <li><button>信息<span>(<u>I</u>)</span></button></li>
    <li><button>分析<span>(<u>L</u>)</span></button></li>
    <li><button>首选项<span>(<u>P</u>)</span></button></li>
    <li><button>窗口<span>(<u>O</u>)</span></button></li>
    <li><button><span>GC </span>工具箱</button></li>
    <li><button>帮助<span>(<u>H</u>)</span></button></li>
  </ul>
  <div class="docwin">
    <button aria-label="最小化"><svg viewBox="0 0 14 14"><path d="M4 10h6" stroke="#555" stroke-width="2"/></svg></button>
    <button aria-label="还原"><svg viewBox="0 0 14 14"><path d="M5 5V3h7v5h-2M3 6h7v5H3zM3 7h7" fill="none" stroke="#555" stroke-width="1.500"/></svg></button>
    <button aria-label="关闭"><svg viewBox="0 0 14 14"><path d="M3 3l8 8M11 3l-8 8" stroke="#444" stroke-width="2.500"/></svg></button>
  </div>
</nav>

<div class="bar">
  <div class="grp"><i class="grip"></i>
    <button class="txt start"><svg><use href="#nx"/></svg>开始<i class="tri"></i></button>
    <button class="b" aria-label="新建"><svg><use href="#new"/></svg></button>
    <button class="b" aria-label="打开"><svg><use href="#open"/></svg></button>
    <button class="b" aria-label="保存"><svg><use href="#save"/></svg></button><i class="sep"></i>
    <button class="b" aria-label="剪切"><svg><use href="#cut"/></svg></button>
    <button class="b" aria-label="复制"><svg><use href="#copy"/></svg></button>
    <button class="b" aria-label="粘贴"><svg><use href="#paste"/></svg></button>
    <button class="b" aria-label="删除"><svg><use href="#del"/></svg></button><i class="sep"></i>
    <button class="b" aria-label="撤消"><svg><use href="#undo"/></svg></button>
    <button class="b" aria-label="重做"><svg><use href="#redo"/></svg></button><i class="sep"></i>
    <button class="txt finder"><svg><use href="#binoc"/></svg>命令查找器</button>
    <button class="b" aria-label="触摸模式"><svg><use href="#laptop"/></svg></button><i class="dd"></i><i class="ovf"></i>
  </div>
  <div class="grp"><i class="grip"></i>
    <button class="b" aria-label="适合窗口"><svg><use href="#fit"/></svg></button><i class="dd"></i>
    <button class="b" aria-label="定向视图"><svg><use href="#laptop"/></svg></button><i class="dd"></i>
    <button class="b" aria-label="着色"><svg><use href="#cube"/></svg></button><i class="dd"></i>
    <button class="b" aria-label="背景"><svg><use href="#square"/></svg></button><i class="dd"></i><i class="sep"></i>
    <button class="b" aria-label="编辑截面"><svg><use href="#clip"/></svg></button>
    <button class="b" aria-label="剪切截面"><svg><use href="#clip2"/></svg></button><i class="ovf"></i>
  </div>
  <div class="grp"><i class="grip"></i>
    <button class="b" aria-label="编辑对象显示"><svg><use href="#palette"/></svg></button><i class="sep"></i>
    <button class="b" aria-label="显示和隐藏"><svg><use href="#orient"/></svg></button><i class="dd"></i><i class="sep"></i>
    <button class="b" aria-label="测量距离"><svg><use href="#meas"/></svg></button><i class="dd"></i>
    <button class="b" aria-label="简单距离"><svg><use href="#ruler"/></svg></button><i class="ovf"></i>
  </div>
</div>

<div class="bar tall">
  <div class="grp"><i class="grip"></i>
    <button class="big"><svg><use href="#plane"/></svg>基准平面</button><i class="dd"></i>
    <button class="big"><svg><use href="#extrude"/></svg>拉伸</button><i class="dd"></i>
    <button class="big"><svg><use href="#hole"/></svg>孔</button>
    <button class="big"><svg><use href="#thread"/></svg>螺纹</button><i class="sep"></i>
    <button class="big"><svg><use href="#pattern"/></svg>阵列特征</button><i class="dd"></i>
    <button class="big"><svg><use href="#unite"/></svg>求和</button><i class="dd"></i>
    <button class="big"><svg><use href="#trim"/></svg>修剪体</button><i class="dd"></i>
    <button class="big"><svg><use href="#shell"/></svg>抽壳</button>
    <div class="more spaced"><svg><use href="#chev"/></svg><i class="ovf"></i></div>
  </div>
  <div class="grp"><i class="grip"></i>
    <button class="big"><svg><use href="#offset"/></svg>偏置区域</button><i class="dd"></i>
    <button class="big"><svg><use href="#delface"/></svg>删除面</button><i class="ovf"></i>
  </div>
  <div class="grp"><i class="grip"></i>
    <button class="b" aria-label="检查"><svg><use href="#chk"/></svg></button>
    <button class="b" aria-label="特征列表"><svg><use href="#feat"/></svg></button>
    <button class="b" aria-label="属性表"><svg><use href="#sheet"/></svg></button>
    <button class="b" aria-label="坐标系"><svg><use href="#csys"/></svg></button><i class="ovf"></i>
  </div>
  <div class="grp last"><i class="grip"></i>
    <button class="big"><svg><use href="#ball"/></svg>真实着色</button>
    <button class="big" disabled><svg><use href="#ballB"/></svg>光亮金属<br>刷色</button><i class="dd"></i>
    <button class="big" disabled><svg><use href="#ballR"/></svg>红色亮泽<br>塑料</button><i class="dd"></i>
    <button class="big" disabled><svg><use href="#noref"/></svg>无全局反<br>射图</button><i class="dd"></i>
    <button class="big" disabled><svg><use href="#bgbox"/></svg>渐变深灰<br>色背景</button><i class="dd"></i>
    <button class="big on"><svg><use href="#torch"/></svg>显示阴影</button>
    <button class="big" disabled><svg><use href="#person"/></svg>显示地板<br>反射</button>
    <button class="big" disabled><svg><use href="#floor"/></svg>显示地板<br>栅格</button>
    <div class="more end"><svg><use href="#chev"/></svg><i class="ovf"></i></div>
  </div>
</div>

<div class="bar dark">
  <div class="grp"><i class="grip"></i>
    <button class="b" aria-label="层设置"><svg><use href="#frames"/></svg></button>
    <button class="b" aria-label="图层"><svg><use href="#layers"/></svg></button>
    <button class="b" aria-label="图层类别"><svg><use href="#layers2"/></svg></button><i class="sep"></i>
    <button class="b" aria-label="标签"><svg><use href="#tag"/></svg></button><i class="sep"></i>
    <button class="b" aria-label="检查部件"><svg><use href="#ckblue"/></svg></button>
    <button class="b" aria-label="检查草图"><svg><use href="#ckplane"/></svg></button>
    <button class="b" aria-label="检查装配"><svg><use href="#ckgold"/></svg></button><i class="sep"></i>
    <button class="b" aria-label="注释"><svg viewBox="0 0 24 24"><path d="M2 3l6-2 6 2v7l-6 3-6-3z" fill="url(#gGold)" stroke="#a07000"/><path d="M13 11l8-8 2 2-8 8z" fill="#e8a020" stroke="#700"/><path d="M.500 14.500h16v8H.500z" fill="#fff" stroke="#213"/><text class="abc" x="2" y="21">ABC</text><path d="M18 14l6 5-6 5z" fill="#a1c"/></svg></button><i class="ovf"></i>
  </div>
  <div class="grp"><i class="grip"></i>
    <button class="b" aria-label="折弯"><svg><use href="#bend"/></svg></button>
    <button class="b" aria-label="弧形折弯"><svg><use href="#bend2"/></svg></button>
    <button class="b" aria-label="选择项"><svg><use href="#point"/></svg></button><i class="ovf"></i>
  </div>
  <div class="grp"><i class="grip"></i>
    <button class="b" aria-label="压缩弹簧"><svg><use href="#spring"/></svg></button>
    <button class="b" aria-label="拉伸弹簧"><svg><use href="#spring2"/></svg></button>
    <button class="b" aria-label="碟簧"><svg><use href="#disc"/></svg></button><i class="sep"></i>
    <button class="b" aria-label="删除弹簧"><svg><use href="#nospring"/></svg></button><i class="ovf"></i>
  </div>
  <div class="grp far"><i class="grip"></i>
    <button class="b" aria-label="三角形"><svg><use href="#tri"/></svg></button>
    <button class="b" aria-label="表"><svg><use href="#tbl"/></svg></button>
    <button class="b" aria-label="点集"><svg><use href="#fold1"/></svg></button>
    <button class="b" aria-label="圆集"><svg><use href="#fold2"/></svg></button><i class="ovf"></i>
  </div>
  <div class="grp near"><i class="grip"></i>
    <button class="b" aria-label="装配约束"><svg><use href="#asm"/></svg></button>
    <button class="b" aria-label="装配移动"><svg><use href="#asm"/></svg></button><i class="ovf"></i>
  </div>
</div>

<div class="selbar">
  <select class="f1" aria-label="选择过滤器"><option>没有选择过滤器</option></select>
  <select class="f2" aria-label="选择范围"><option>整个装配</option></select>
  <button class="s" aria-label="齿轮"><svg><use href="#gears"/></svg></button><i class="sep"></i>
  <button class="s" aria-label="过滤"><svg><use href="#filt"/></svg></button>
  <button class="s" aria-label="重置"><svg><use href="#reset"/></svg></button>
  <button class="s" aria-label="常规选择"><svg><use href="#sfilt"/></svg></button><i class="sep"></i>
  <button class="s" aria-label="高亮边"><svg><use href="#box1"/></svg></button>
  <button class="s" aria-label="实体"><svg><use href="#box2"/></svg></button><i class="sep"></i>
  <button class="s on" aria-label="端点"><svg><use href="#s1"/></svg></button>
  <button class="s on" aria-label="中点"><svg><use href="#s2"/></svg></button>
  <button class="s" aria-label="控制点"><svg><use href="#s3"/></svg></button>
  <button class="s" aria-label="交点"><svg><use href="#s4"/></svg></button>
  <button class="s on" aria-label="圆心"><svg><use href="#s5"/></svg></button>
  <button class="s" aria-label="象限点"><svg><use href="#s6"/></svg></button>
  <button class="s on" aria-label="现有点"><svg><use href="#s7"/></svg></button>
  <button class="s on" aria-label="曲线上的点"><svg><use href="#s8"/></svg></button>
  <button class="s" aria-label="面上的点"><svg><use href="#s9"/></svg></button><i class="sep"></i>
  <button class="s" aria-label="栅格点"><svg><use href="#s10"/></svg></button>
  <i class="ovf push"></i>
</div>

<div class="status">
  <p class="cue">选择对象并使用<span> MB3</span>，或者双击某一对象</p>
  <p class="msg">体<span>(0) </span>已选定</p>
  <i class="cell"></i><i class="cell"></i>
  <span class="mini"><svg viewBox="0 0 16 16"><path d="M0 0h16v16H0z" fill="#7c8488"/><path d="M3 4h10v8H3z" fill="#8c9498"/></svg></span>
  <span class="mini"><svg viewBox="0 0 16 16"><path d="M3 4h10v8H3z" fill="#cfe8f8" stroke="#246"/><path d="M5 6h6v4H5z" fill="#48a"/><path d="M1 4V1h3M12 1h3v3M15 12v3h-3M4 15H1v-3" fill="none" stroke="#246"/></svg></span>
</div>

<main>
  <aside class="tabs">
    <button aria-label="装配导航器"><svg><use href="#tasm"/></svg></button>
    <button aria-label="约束导航器"><svg><use href="#mirror"/></svg></button>
    <button class="cur" aria-label="部件导航器"><svg><use href="#tpart"/></svg></button>
    <button aria-label="重用库"><svg><use href="#books"/></svg></button>
    <button class="gap" aria-label="信息"><svg viewBox="0 0 24 24"><circle cx="9" cy="16" r="7.500" fill="#1a78d8" stroke="#0a4a98"/><text class="info" x="7" y="21">i</text><path d="M9 6q9 0 10 10M9 1q14 0 15 13" fill="none" stroke="#3a88e0" stroke-width="2.500"/></svg></button>
    <button class="gap" aria-label="浏览器"><svg><use href="#web"/></svg></button>
    <button class="gap" aria-label="历史记录"><svg><use href="#clock"/></svg></button>
    <button aria-label="系统材料"><svg><use href="#tlist"/></svg></button>
    <button aria-label="可视化"><svg><use href="#spec"/></svg></button>
    <button aria-label="加工向导"><svg><use href="#machine"/></svg></button>
    <button aria-label="角色"><svg><use href="#people"/></svg></button>
    <button aria-label="系统场景"><svg><use href="#tview"/></svg></button>
  </aside>
  <section class="panel">
    <h2><svg><use href="#pin"/></svg>部件导航器</h2>
    <div class="tree">
      <div class="rows">
      <table>
        <colgroup><col class="c1"><col class="c2"><col></colgroup>
        <thead><tr><th>名称<i class="sort"></i></th><th>附注</th><th></th></tr></thead>
        <tbody>
        <tr><td><div class="n top"><i class="ex plus"></i><svg><use href="#clock"/></svg><svg><use href="#drawing"/></svg>图纸</div></td><td></td><td></td></tr>
        <tr><td><div class="n"><i class="ex plus"></i><svg><use href="#folderE"/></svg>用户表达式</div></td><td></td><td></td></tr>
        <tr><td><div class="n"><i class="ex plus"></i><svg><use href="#folder"/></svg>组</div></td><td></td><td></td></tr>
        <tr><td><div class="n bot"><i class="ex"></i><svg><use href="#folder"/></svg>模型历史记录</div></td><td></td><td></td></tr>
        <tr class="sel"><td><label class="k"><input type="checkbox" checked><svg><use href="#body"/></svg><b>体<span>(0)</span></b></label></td><td></td><td></td></tr>
        <tr><td><label class="k"><input type="checkbox" checked><svg><use href="#body"/></svg><b>体<span>(2)</span></b></label></td><td></td><td></td></tr>
        <tr><td><label class="k"><input type="checkbox" checked><svg><use href="#body"/></svg><b>体<span>(4)</span></b></label></td><td></td><td></td></tr>
        <tr><td><label class="k"><input type="checkbox" checked><svg><use href="#body"/></svg><b>体<span>(6)</span></b></label></td><td></td><td></td></tr>
        <tr><td><label class="k"><input type="checkbox" checked><svg><use href="#body"/></svg><b>体<span>(8)</span></b></label></td><td></td><td></td></tr>
        <tr><td><label class="k"><input type="checkbox" checked><svg><use href="#body"/></svg><b>体<span>(10)</span></b></label></td><td></td><td></td></tr>
        <tr><td><label class="k"><input type="checkbox" checked><svg><use href="#body"/></svg><b>体<span>(12)</span></b></label></td><td></td><td></td></tr>
        <tr><td><label class="k"><input type="checkbox" checked><svg><use href="#body"/></svg><b>体<span>(14)</span></b></label></td><td></td><td></td></tr>
        <tr><td><label class="k"><input type="checkbox" checked><svg><use href="#body"/></svg><b>体<span>(16)</span></b></label></td><td></td><td></td></tr>
        <tr><td><label class="k"><input type="checkbox" checked><svg><use href="#body"/></svg><b>体<span>(18)</span></b></label></td><td></td><td></td></tr>
        <tr><td><label class="k"><input type="checkbox" checked><svg><use href="#body"/></svg><b>体<span>(20)</span></b></label></td><td></td><td></td></tr>
        <tr><td><label class="k"><input type="checkbox" checked><svg><use href="#body"/></svg><b>体<span>(22)</span></b></label></td><td></td><td></td></tr>
        <tr><td><label class="k"><input type="checkbox" checked><svg><use href="#body"/></svg><b>体<span>(24)</span></b></label></td><td></td><td></td></tr>
        <tr><td><label class="k"><input type="checkbox" checked><svg><use href="#body"/></svg><b>体<span>(26)</span></b></label></td><td></td><td></td></tr>
        <tr><td><label class="k"><input type="checkbox" checked><svg><use href="#body"/></svg><b>体<span>(28)</span></b></label></td><td></td><td></td></tr>
        <tr><td><label class="k"><input type="checkbox" checked><svg><use href="#body"/></svg><b>体<span>(30)</span></b></label></td><td></td><td></td></tr>
        <tr><td><label class="k"><input type="checkbox" checked><svg><use href="#body"/></svg><b>体<span>(32)</span></b></label></td><td></td><td></td></tr>
        <tr><td><label class="k"><input type="checkbox" checked><svg><use href="#body"/></svg><b>体<span>(34)</span></b></label></td><td></td><td></td></tr>
        <tr><td><label class="k"><input type="checkbox" checked><svg><use href="#body"/></svg><b>体<span>(36)</span></b></label></td><td></td><td></td></tr>
        <tr><td><label class="k"><input type="checkbox" checked><svg><use href="#body"/></svg><b>体<span>(38)</span></b></label></td><td></td><td></td></tr>
        <tr><td><label class="k"><input type="checkbox" checked><svg><use href="#body"/></svg><b>体<span>(40)</span></b></label></td><td></td><td></td></tr>
        <tr><td><label class="k"><input type="checkbox" checked><svg><use href="#body"/></svg><b>体<span>(42)</span></b></label></td><td></td><td></td></tr>
        <tr><td><label class="k"><input type="checkbox" checked><svg><use href="#body"/></svg><b>体<span>(44)</span></b></label></td><td></td><td></td></tr>
        <tr><td><label class="k"><input type="checkbox" checked><svg><use href="#body"/></svg><b>体<span>(46)</span></b></label></td><td></td><td></td></tr>
        <tr><td><label class="k"><input type="checkbox" checked><svg><use href="#body"/></svg><b>体<span>(48)</span></b></label></td><td></td><td></td></tr>
        <tr><td><label class="k"><input type="checkbox" checked><svg><use href="#body"/></svg><b>体<span>(50)</span></b></label></td><td></td><td></td></tr>
        <tr><td><label class="k"><input type="checkbox" checked><svg><use href="#body"/></svg><b>体<span>(52)</span></b></label></td><td></td><td></td></tr>
        <tr><td><label class="k"><input type="checkbox" checked><svg><use href="#body"/></svg><b>体<span>(54)</span></b></label></td><td></td><td></td></tr>
        </tbody>
      </table>
      <div class="vbar"><i class="tri up"></i><div class="thumb"><i></i></div><i class="tri"></i></div>
      </div>
      <div class="hbar"><i class="tri left"></i><div class="thumb"><i></i></div><i class="tri right"></i></div>
    </div>
    <div class="splitter"><i></i></div>
  </section>

  <section class="view">
    <svg viewBox="335 235 1150 721" role="img" aria-label="模具装配模型">
      <defs>
        <pattern id="coil" x="697" y="684" width="46" height="7" patternUnits="userSpaceOnUse"><path d="M0 0h46v7H0z" fill="#2626b4"/><path d="M0 1q23 6 46 0" fill="none" stroke="#5050f8" stroke-width="2.500"/><path d="M0 3q23 6 46 0" fill="none" stroke="#000" stroke-width="1.500"/></pattern>
        <linearGradient id="bowl" x1="0" y1="0" x2="1" y2="0"><stop offset="0" stop-color="#0a9a72"/><stop offset=".35" stop-color="#30d8a0"/><stop offset="1" stop-color="#0a8a66"/></linearGradient>
        <linearGradient id="rim" x1="0" y1="0" x2="1" y2="0"><stop offset="0" stop-color="#0a7a58"/><stop offset="1" stop-color="#08966c"/></linearGradient>
      </defs>
      <g stroke="#000" stroke-width="1.500" stroke-linejoin="round">
        <path d="M608 800l24-8 556-4 24 14-360 110z" fill="#fff"/>
        <path d="M608 800l244 112v35L608 835z" fill="#bebebe"/>
        <path d="M852 912l360-110v36L852 947z" fill="#d8d8d8"/>
        <path d="M668 668l123 58v157l-123-56z" fill="#dcdcdc"/>
        <path d="M671 826l120 57v-10l-120-50z" fill="#fff" stroke="none"/>
        <path d="M671 771l103-32 17 0v86z" fill="#b4fafa" stroke-width="1"/>
        <path d="M671 771l119 54v22l-119-53z" fill="#70bcb8"/>
        <path d="M671 794l119 53v28l-119-53z" fill="#7c88a8"/>
        <ellipse cx="692" cy="771" rx="6" ry="3" fill="#3838d8" stroke-width="1"/>
        <path d="M697 676h46v98q-6 4-12 0-20 2-34-5z" fill="url(#coil)" stroke="none"/>
        <path d="M775 710h16v99q-10 1-16-5z" fill="url(#coil)" stroke="none"/>
        <path d="M778 819l13-4v8z" fill="#1c1c70"/>
        <path d="M632 653l36 17v157l-36-17z" fill="#bebebe"/>
        <path d="M791 725l36 17v158l-36-17z" fill="#bebebe"/>
        <path d="M827 742l361-110v159L827 900z" fill="#dadada"/>
        <path d="M632 610l195 89v43l-195-89z" fill="#a87c7c"/>
        <path d="M827 699l361-110v43L827 742z" fill="#b48686"/>
        <path d="M632 552l195 90v57l-195-89z" fill="#bca020"/>
        <path d="M827 642l361-110v57L827 699z" fill="#d8ba28"/>
        <path d="M632 437l195 89v116l-195-90z" fill="#167c7e"/>
        <path d="M827 526l361-109v115L827 642z" fill="#1a8c8c"/>
        <path d="M632 405l195 90v31l-195-89z" fill="#c6a590"/>
        <path d="M827 495l361-92v14L827 526z" fill="#d6b49e"/>
        <path d="M608 354l244 111v43L608 397z" fill="#bebebe"/>
        <path d="M852 465l360-109v42L852 508z" fill="#d8d8d8"/>
        <path d="M968 243l244 113-360 109-244-111z" fill="#fff"/>
        <path d="M843 907h5l3 4h5l4-3h4" fill="none" stroke-width="2.500"/>
      </g>
      <g stroke="#000" stroke-width="2">
        <g fill="#7c7cf8"><ellipse cx="988" cy="272" rx="19" ry="7"/><ellipse cx="1138" cy="342" rx="19" ry="7"/><ellipse cx="682" cy="366" rx="19" ry="7"/><ellipse cx="835" cy="435" rx="19" ry="7"/></g>
        <g fill="#f0ee20"><ellipse cx="1061" cy="309" rx="14" ry="5"/><ellipse cx="760" cy="400" rx="14" ry="5"/></g>
        <g fill="#8a8a18" stroke-width="1.500"><ellipse cx="1061" cy="310" rx="6" ry="3"/><ellipse cx="760" cy="401" rx="6" ry="3"/><path d="M1061 307v6M760 398v6"/></g>
        <path d="M832 341v13a78 29 0 0 0 156 0v-13z" fill="url(#rim)" stroke-width="1"/>
        <ellipse cx="910" cy="341" rx="78" ry="29" fill="#08bc8c"/>
        <ellipse cx="910" cy="340" rx="43" ry="16" fill="url(#bowl)" stroke-width="1.500"/>
        <path d="M884 352q26-14 52 0-26 8-52 0z" fill="#0a7858" stroke-width="1"/>
        <path d="M896 354q14-5 29 0-15 3-29 0z" fill="#a8c840" stroke="none"/>
        <ellipse cx="868" cy="320" rx="8" ry="3" fill="#044"/><ellipse cx="952" cy="359" rx="8" ry="3" fill="#044"/>
      </g>
      <g fill="none" stroke="#ffa04c" stroke-width="4">
        <ellipse cx="850" cy="495" rx="44" ry="17" stroke-width="6"/>
        <ellipse cx="850" cy="560" rx="45" ry="17"/>
        <path d="M815 505v42M822 485v89M877 485v89M884 505v42"/>
        <path d="M849 495v65" stroke-width="7"/>
        <path d="M812 497l65-15M822 483l62 22M812 505l65-22M822 574l55-28M822 546l55 28M806 560h88"/>
      </g>
      <path d="M910 490l3 25-3 24-3-24z" fill="#6878e0"/>
      <path d="M914 541l39-13-8 8z" fill="#a8f0b0"/><path d="M914 543l33 15-12-3z" fill="#f89090"/>
      <g class="axis"><text x="914" y="487" fill="#2850e8">ZC</text><text x="939" y="524" fill="#188040">YC</text><text x="930" y="570" fill="#d83838">XC</text></g>
      <path d="M395 874l17-7 16 8v23l-16 6-17-8z" fill="#a8a8a8"/><path d="M395 874l17 6 16-5M412 880v24" stroke="#c0c0c0" fill="none"/>
      <path d="M393 896V868" stroke="#1040e0" stroke-width="3"/><path d="M390 870l4-10 4 10z" fill="#1040e0"/>
      <path d="M394 896l36-11 2-5M430 885v5" stroke="#50b860" stroke-width="1.500" fill="none"/><path d="M394 896l24 11" stroke="#e02828" stroke-width="3"/>
      <circle cx="393" cy="896" r="4" fill="#ddd"/>
      <g class="axis"><text x="390" y="859" fill="#1040e0">Z</text><text x="418" y="914" fill="#d84040">X</text></g>
    </svg>
    <div class="ime">
      <div class="avatar"><svg viewBox="0 0 36 36"><path d="M18 3q9 0 9 11l5 10-4 1q1 6-4 8H12q-5-2-4-8l-4-1 5-10q0-11 9-11z" fill="#c8d2dc" stroke="#a8b4c0"/><path d="M12 8q6-5 12 0v6q-6 4-12 0zM10 18q8 5 16 0" fill="#d4dfea" stroke="#a8b4c0"/></svg></div>
      <div class="keys">
        <button>中</button>
        <button aria-label="半角"><svg viewBox="0 0 14 14"><path d="M8 1q6 3 4 8-3 5-11 3 8-1 7-11z" fill="#2a86e8"/></svg></button>
        <button aria-label="标点"><svg viewBox="0 0 14 14"><circle cx="4" cy="7" r="1.500" fill="none" stroke="#2a86e8"/><path d="M9 5h3v3l-2 3z" fill="#2a86e8"/></svg></button>
        <button aria-label="工具"><svg viewBox="0 0 14 14"><path d="M2 12l7-7" stroke="#2a86e8" stroke-width="3"/><path d="M7 6q-1-4 4-5l-2 3 1 1 3-2q1 5-4 5z" fill="#2a86e8"/></svg></button>
        <button aria-label="剪贴板"><svg viewBox="0 0 14 14"><path d="M2 13V3h9v2M4 1h5v3H4zM2 3h3v10H2z" fill="#2a86e8" stroke="#2a86e8"/><path d="M5.500 6.500h7v7h-7z" fill="#fff" stroke="#2a86e8"/><path d="M7 9h4M7 11h4" stroke="#2a86e8"/></svg></button>
        <button aria-label="表情"><svg viewBox="0 0 16 16"><circle cx="8" cy="8" r="7" fill="none" stroke="#2a86e8" stroke-width="1.500"/><path d="M4.500 9q3.500 5 7 0M5.500 5v2M10.500 5v2" fill="none" stroke="#2a86e8" stroke-width="1.500"/></svg></button>
      </div>
    </div>
  </section>
</main>

<div class="bar foot1">
  <div class="grp"><i class="grip"></i>
    <button class="b" aria-label="查找组件"><svg><use href="#asmoff"/></svg></button>
    <button class="b" aria-label="添加组件"><svg><use href="#asmadd"/></svg></button>
    <button class="b" aria-label="移动组件"><svg><use href="#asmmove"/></svg></button>
    <button class="b" aria-label="装配约束"><svg><use href="#mirror"/></svg></button><i class="sep"></i>
    <button class="b" aria-label="爆炸图"><svg><use href="#asm3"/></svg></button><i class="ovf"></i>
  </div>
</div>
<div class="bar foot2">
  <div class="grp"><i class="grip"></i>
    <button class="b" aria-label="草图"><svg><use href="#sketch"/></svg></button>
    <button class="txt done" disabled><svg><use href="#finish"/></svg>完成草图</button>
    <button class="b" aria-label="轮廓"><svg><use href="#k1"/></svg></button>
    <button class="b" aria-label="直线"><svg><use href="#k2"/></svg></button>
    <button class="b" aria-label="圆弧"><svg><use href="#k3"/></svg></button>
    <button class="b" aria-label="圆"><svg><use href="#k4"/></svg></button>
    <button class="b" aria-label="圆角"><svg><use href="#k5"/></svg></button>
    <button class="b" aria-label="倒斜角"><svg><use href="#k6"/></svg></button>
    <button class="b" aria-label="矩形"><svg><use href="#k7"/></svg></button>
    <button class="b" aria-label="样条"><svg><use href="#k8"/></svg></button>
    <button class="b" aria-label="点"><svg><use href="#k9"/></svg></button>
    <button class="b" aria-label="偏置曲线"><svg><use href="#k10"/></svg></button><i class="dd"></i><i class="sep"></i>
    <button class="b" aria-label="快速修剪"><svg><use href="#k11"/></svg></button>
    <button class="b" aria-label="快速延伸"><svg><use href="#k12"/></svg></button><i class="sep"></i>
    <button class="b" aria-label="自动尺寸"><svg><use href="#k13"/></svg></button><i class="dd"></i><i class="sep"></i>
    <button class="b" aria-label="几何约束"><svg><use href="#k14"/></svg></button>
    <button class="b" aria-label="自动约束"><svg><use href="#k15"/></svg></button><i class="dd"></i>
    <button class="b" aria-label="显示约束"><svg><use href="#k16"/></svg></button>
    <button class="b" aria-label="转换参考"><svg><use href="#k17"/></svg></button><i class="dd"></i><i class="ovf"></i>
  </div>
</div>
</div>
</body>
</html>
```
FILE: styles.css
```css
* { box-sizing: border-box; }
html { background: #1c6cb0; }
body {
  margin: 0;
  height: 100vh;
  font: 12px/14px "Noto Sans CJK SC", sans-serif;
  color: #000;
}
button {
  margin: 0; padding: 0; border: 0; background: none;
  font: inherit; color: inherit; flex: none;
}
h1, h2, p, ul { margin: 0; padding: 0; }
i { font-style: normal; flex: none; }
svg { display: block; flex: none; width: 24px; height: 24px; overflow: visible; }
.sprite { position: absolute; width: 0; height: 0; }
.i16 { width: 16px; height: 16px; }
.abc { font: bold 6px "Liberation Sans", sans-serif; }
.info { font: bold 14px "Liberation Serif", serif; fill: #fff; }
.axis { font: 12px "Liberation Sans", sans-serif; }

.window {
  display: flex; flex-direction: column;
  height: 100%;
  padding: 0 4px 8px;
  border-radius: 6px 6px 4px 4px;
  background: #0c0c0c;
  overflow: hidden;
}

/* title bar */
.titlebar {
  display: flex; align-items: center; flex: none;
  height: 30px; margin: 0 -4px; padding: 0 5px 2px 6px;
  background: linear-gradient(#000 0 1px, #84848a 2px, #48484c 9px, #1c1c1c 10px, #141414 29px, #000);
  color: #fff;
}
.titlebar h1 {
  flex: 1; margin-left: 5px;
  font: 12px/16px "Noto Sans", "Noto Sans CJK SC", sans-serif;
}
.brand { font: 900 14px/16px "Noto Sans", sans-serif; margin-right: 20px; }
.win {
  width: 18px; height: 18px; margin-left: 5px; padding: 0;
  border: 1px solid #777; border-radius: 3px;
  background: linear-gradient(#777, #333);
}
.win svg { width: 16px; height: 16px; }
.win.close { background: linear-gradient(#f09080, #d83a18); border-color: #e8a090; }

/* menu bar */
.menubar {
  display: flex; align-items: center; flex: none;
  height: 23px;
  background: #e6e6e6;
}
.menubar ul { display: flex; gap: 13px; margin-left: 6px; flex: 1; list-style: none; }
.menubar li { display: flex; }
.menubar button { white-space: pre; }
.menubar span, .k span { font: 10px/12px "Liberation Mono", monospace; vertical-align: 1px; }
.docwin { display: flex; gap: 3px; margin-right: 5px; }
.docwin button { width: 16px; height: 16px; border: 1px solid #888; border-radius: 3px; background: #f8f8f8; }
.docwin svg { width: 14px; height: 14px; }

/* toolbars */
.bar {
  display: flex; flex: none;
  height: 35px;
  border-top: 1px solid #b8b8b8;
  background: #dedede;
}
.grp {
  display: flex; align-items: center;
  padding-right: 2px;
  border-right: 1px solid #b0b0b0;
  box-shadow: inset 0 1px #fff, 1px 0 #f4f4f4;
}
.grip {
  width: 3px; height: 24px; margin: 0 1px 0 4px;
  background: repeating-linear-gradient(#999 0 2px, #f4f4f4 2px 4px);
}
.sep { align-self: stretch; width: 2px; margin: 3px 2px; background: linear-gradient(90deg, #aaa 50%, #fff 50%); }
.b { display: flex; align-items: center; justify-content: center; width: 31px; height: 31px; }
.txt { display: flex; align-items: center; height: 31px; }
.start { width: 67px; padding-left: 3px; gap: 3px; }
.finder { width: 95px; padding-left: 3px; gap: 3px; }
.done { width: 83px; padding-left: 4px; gap: 3px; }
.txt:disabled, .big:disabled { color: #909090; }
.dd, .ovf { display: flex; justify-content: center; width: 12px; }
.ovf { align-self: flex-end; width: 11px; padding-bottom: 7px; }
.dd::before, .ovf::before, .tri::before {
  content: ""; display: block;
  border: 3px solid transparent; border-top-color: #000; border-bottom: 0;
}
.push { margin-left: auto; margin-right: 4px; padding-bottom: 6px; }

.tall { height: 61px; background: #d8d8d8; }
.tall .grip { height: 52px; }
.tall .ovf { padding-bottom: 5px; }
.big {
  display: flex; flex-direction: column; align-items: center;
  align-self: flex-start;
  width: 60px; height: 58px; margin-top: 1px; padding-top: 3px;
  border: 1px solid transparent; border-radius: 3px;
  line-height: 12px; text-align: center;
}
.big svg { margin-bottom: 3px; }
.big.on, .s.on { border: 1px solid #333; background: #fff; }
.more { display: flex; flex-direction: column; align-self: stretch; justify-content: space-between; width: 13px; padding-top: 3px; }
.more svg { width: 10px; height: 8px; }
.more .ovf { align-self: center; }
.spaced { margin-left: 30px; }
.last { flex: 1; padding-right: 0; border-right: 0; box-shadow: inset 0 1px #fff; }
.end { margin-left: auto; }
.dark { background: #d2d2d2; }
.far { margin-left: 93px; border-left: 1px solid #f4f4f4; }
.near { margin-left: 29px; border-left: 1px solid #f4f4f4; }

/* selection bar */
.selbar {
  display: flex; align-items: center; flex: none;
  height: 27px; padding-left: 5px;
  border-top: 1px solid #999;
  background: linear-gradient(#bcbcbc, #cfcfcf 6px, #d6d6d6);
}
.selbar select {
  height: 17px; margin: 0 9px 0 0; padding: 0;
  appearance: none; border: 1px solid #445; border-radius: 1px;
  font: 12px/14px "Noto Sans CJK SC", sans-serif; color: #000;
  background:
    linear-gradient(to top right, transparent 50%, #112 51%) right 8px center / 5px 6px no-repeat,
    linear-gradient(to top left, transparent 50%, #112 51%) right 3px center / 5px 6px no-repeat,
    linear-gradient(#a8d0f4, #58a0e0) right / 16px 100% no-repeat,
    #fff;
}
.selbar .f1 { width: 110px; }
.selbar .f2 { width: 115px; margin-right: 4px; }
.s { display: flex; align-items: center; justify-content: center; width: 23px; height: 22px; border: 1px solid transparent; border-radius: 2px; }
.s svg { width: 16px; height: 16px; }

/* cue and status line */
.status {
  display: flex; align-items: center; flex: none;
  height: 24px; padding: 0 4px 0 3px;
  border-top: 1px solid #f4f4f4;
  background: #d8d8d8;
  font-size: 13px; line-height: 16px; font-weight: bold;
}
.status p { white-space: pre; }
.status p span { font: bold 11px/14px "Liberation Mono", monospace; vertical-align: 1px; }
.cue { flex: 98; }
.msg { flex: 100; padding-left: 3px; border-left: 1px solid #f0f0f0; }
.cell { width: 20px; height: 23px; border-left: 1px solid #b4b4b4; }
.mini { margin-left: 4px; }
.mini svg { width: 16px; height: 16px; }

/* work area */
main { display: flex; flex: 1; min-height: 0; background: #000; }
.tabs {
  display: flex; flex-direction: column; align-items: flex-end; gap: 2px;
  width: 33px; padding-top: 16px;
  background: #a8a8a8;
}
.tabs button {
  display: flex; align-items: center; justify-content: center;
  width: 27px; height: 40px;
  border: 1px solid #777; border-right: 0; border-radius: 4px 0 0 4px;
  background: #d2d2d2;
}
.tabs .cur { width: 29px; background: #ececec; }
.tabs .gap { margin-top: 12px; }
.panel {
  display: flex; flex-direction: column;
  width: 298px; padding: 0 9px;
  border-right: 2px solid #888;
  background: #ebebeb;
}
.panel h2 { display: flex; align-items: center; gap: 13px; height: 30px; padding-left: 5px; font-size: 13px; line-height: 16px; }
.panel h2 svg { width: 12px; height: 12px; }
.tree { display: flex; flex-direction: column; flex: 1; min-height: 0; border: 1px solid #555; }
.rows { position: relative; flex: 1; min-height: 0; overflow: hidden; background: #fff; }
table { width: 100%; table-layout: fixed; border-collapse: separate; border-spacing: 0; }
.c1 { width: 200px; }
.c2 { width: 58px; }
th {
  height: 17px; padding: 0 0 0 6px;
  border-bottom: 1px solid #888;
  background: linear-gradient(#f0f0f0, #d4d4d4);
  font-weight: normal; line-height: 14px; text-align: left;
}
th + th { padding-left: 5px; border-left: 1px solid #999; }
th:last-child { border-left: 0; }
.sort { display: inline-block; margin: 0 0 3px 16px; border: 5px solid transparent; border-top: 0; border-bottom-color: #000; }
td { height: 20px; padding: 0; border-bottom: 1px solid #dcdcdc; }
td + td { border-left: 1px solid #dcdcdc; }
tbody tr:nth-child(odd) { background: #f4f4f4; }
.n { display: flex; align-items: center; height: 19px; padding-left: 5px; background: repeating-linear-gradient(#aaa 0 1px, transparent 1px 2px) 9px 0 / 1px 100% no-repeat; }
.n svg { width: 16px; height: 16px; margin-right: 1px; }
.n.top { background-position: 9px 10px; }
.n.bot { background-size: 1px 10px; }
.n svg:last-of-type { margin-right: 2px; }
.ex { width: 9px; height: 9px; margin-right: 6px; border: 1px solid #888; border-radius: 1px; background: linear-gradient(#333, #333) center / 5px 1px no-repeat, #fff; }
.ex.plus { background: linear-gradient(#333, #333) center / 5px 1px no-repeat, linear-gradient(#333, #333) center / 1px 5px no-repeat, #fff; }
.k {
  display: flex; align-items: center; height: 19px; padding-left: 41px;
  background:
    repeating-linear-gradient(#aaa 0 1px, transparent 1px 2px) 29px 0 / 1px 100% no-repeat,
    repeating-linear-gradient(90deg, #aaa 0 1px, transparent 1px 2px) 30px 9px / 9px 1px no-repeat;
}
.k input {
  appearance: none; flex: none;
  width: 12px; height: 12px; margin: 0 2px 0 0;
  border: 1px solid #000; background: #fff;
}
.k input:checked::before {
  content: ""; display: block; width: 10px; height: 10px;
  background: #10b828;
  clip-path: polygon(5% 45%, 25% 35%, 42% 58%, 80% 0, 100% 15%, 45% 100%);
}
.k svg { width: 16px; height: 16px; }
.k b { flex: 1; padding-left: 2px; font-weight: normal; line-height: 19px; }
.k b span { margin-left: 8px; }
.sel b, .sel td:nth-child(2) { background: #3296fa; color: #fff; }

.vbar {
  position: absolute; top: 17px; right: 0; bottom: 0;
  display: flex; flex-direction: column; align-items: center;
  width: 18px; padding: 8px 0;
  background: #ececec;
}
.vbar .thumb { width: 15px; height: 179px; margin: 25px 0 auto; }
.thumb { display: flex; align-items: center; justify-content: center; border: 1px solid #888; border-radius: 2px; background: #d8d8d8; }
.vbar .thumb i { width: 6px; height: 8px; background: repeating-linear-gradient(#444 0 1px, transparent 1px 3px); }
.tri { display: block; }
.up { transform: rotate(180deg); }
.hbar { display: flex; align-items: center; height: 17px; padding: 0 24px 0 6px; background: #ececec; }
.hbar .thumb { width: 188px; height: 15px; margin: 0 auto 0 7px; }
.hbar .thumb i { width: 8px; height: 7px; background: repeating-linear-gradient(90deg, #444 0 1px, transparent 1px 3px); }
.left { transform: rotate(90deg); }
.right { transform: rotate(-90deg); }
.splitter { display: flex; justify-content: center; height: 17px; padding-top: 4px; background: linear-gradient(#bbb, #bbb) 0 6px / 100% 1px no-repeat; }
.splitter i { width: 50px; height: 5px; border: 1px solid #aaa; background: #d4d4d4; }

.view { position: relative; flex: 1; min-width: 0; background: #000; }
.view > svg { width: 100%; height: 100%; }
.ime { position: absolute; right: 248px; bottom: 4px; display: flex; align-items: flex-end; }
.avatar { width: 40px; height: 40px; border: 2px solid #3a90f0; background: #dfe8f2; }
.avatar svg { width: 36px; height: 36px; }
.keys { display: flex; align-items: center; height: 25px; border: 1px solid #3a90f0; border-left: 0; background: #fff; }
.keys button { display: flex; align-items: center; justify-content: center; width: 21px; height: 23px; color: #2a86e8; font: bold 13px/18px "Noto Sans CJK SC", sans-serif; }
.keys svg { width: 14px; height: 14px; }

.foot1 { background: linear-gradient(#ececec, #dedede); border-top-color: #fff; }
.foot2 { height: 34px; background: linear-gradient(#dcdcdc, #d0d0d0); }
.foot2 .grp { margin-left: 149px; border-left: 1px solid #f4f4f4; }
.foot1 .ovf, .foot2 .ovf { padding-bottom: 6px; }
```
